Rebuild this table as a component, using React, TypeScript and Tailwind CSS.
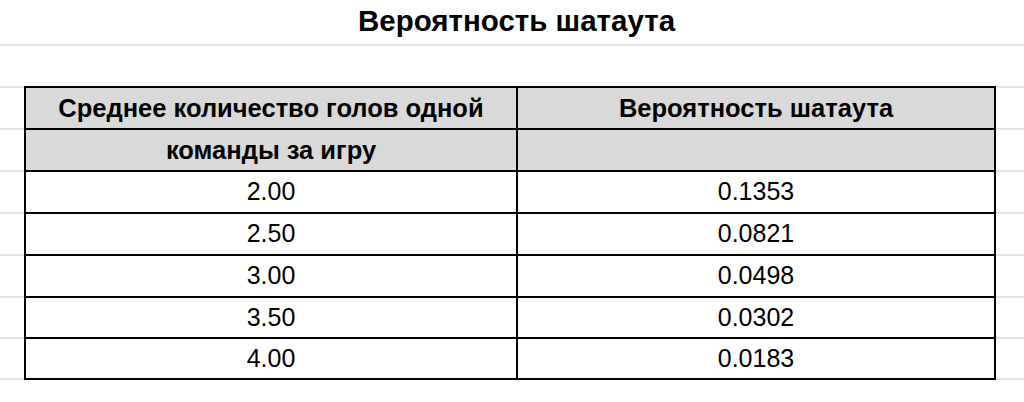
const rows = [
  ["2.00", "0.1353"],
  ["2.50", "0.0821"],
  ["3.00", "0.0498"],
  ["3.50", "0.0302"],
  ["4.00", "0.0183"],
];

const grid = "border-[#e3e3e3]";

function Row({
  left,
  right,
  head,
  h,
}: {
  left: string;
  right: string;
  head?: boolean;
  h: string;
}) {
  const cell = head
    ? "bg-[#d9d9d9] font-bold text-[25.5px]"
    : "bg-white text-[25px]";
  return (
    <div className={`flex ${h}`}>
      <div className={`w-[24px] border-t-2 ${grid}`} />
      <div
        className={`flex w-[492px] items-center justify-center border-l-2 border-t-2 border-black ${cell}`}
      >
        {left}
      </div>
      <div
        className={`flex w-[480px] items-center justify-center border-x-2 border-t-2 border-black ${cell}`}
      >
        {right}
      </div>
      <div className={`flex-1 border-t-2 ${grid}`} />
    </div>
  );
}

export default function App() {
  return (
    <div
      className="h-[402px] w-[1024px] overflow-hidden bg-white text-black"
      style={{ fontFamily: '"Liberation Sans", Arial, sans-serif' }}
    >
      <div className={`flex h-[46px] items-center justify-center border-b-2 pb-[2px] pl-[9px] ${grid}`}>
        <h1 className="text-[29.5px] font-bold leading-none">Вероятность шатаута</h1>
      </div>
      <div className="h-[40px]" />
      <Row h="h-[42px]" head left="Среднее количество голов одной" right="Вероятность шатаута" />
      <Row h="h-[42px]" head left="команды за игру" right="" />
      <Row h="h-[42px]" left={rows[0][0]} right={rows[0][1]} />
      <Row h="h-[42px]" left={rows[1][0]} right={rows[1][1]} />
      <Row h="h-[42px]" left={rows[2][0]} right={rows[2][1]} />
      <Row h="h-[41px]" left={rows[3][0]} right={rows[3][1]} />
      <Row h="h-[41px]" left={rows[4][0]} right={rows[4][1]} />
      <div className="flex h-[2px]">
        <div className="w-[24px] bg-[#e3e3e3]" />
        <div className="w-[972px] bg-black" />
        <div className="flex-1 bg-[#e3e3e3]" />
      </div>
    </div>
  );
}
